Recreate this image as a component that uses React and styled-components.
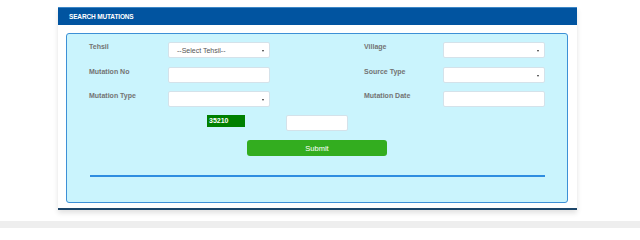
import React from 'react';
import styled, { createGlobalStyle } from 'styled-components';

const GlobalStyle = createGlobalStyle`
  html, body {
    margin: 0;
    padding: 0;
    background: #ffffff;
    font-family: 'Liberation Sans', Arial, sans-serif;
  }
`;

const Page = styled.div`
  width: 640px;
  height: 228px;
  overflow: hidden;
  display: flex;
  flex-direction: column;
`;

const Panel = styled.div`
  margin: 7px 0 0 58px;
  width: 519px;
  background: #ffffff;
  border-bottom: 2px solid #1d4669;
  box-shadow: 0 3px 5px rgba(0, 0, 0, 0.12);
`;

const Header = styled.div`
  height: 17px;
  border-top: 1px solid #3c86c6;
  background: #0154a0;
  color: #ffffff;
  font-size: 6.5px;
  font-weight: 700;
  letter-spacing: -0.15px;
  display: flex;
  align-items: center;
  padding-left: 11px;
`;

const Body = styled.div`
  padding: 8px 9px 5px 8px;
`;

const FormBox = styled.div`
  background: #caf4fd;
  border: 1px solid #3d90d6;
  border-radius: 3px;
  padding: 8px 0 25px 0;
  display: flex;
  flex-direction: column;
`;

const Grid = styled.div`
  display: grid;
  grid-template-columns: 79px 102px 94px 79px 102px;
  grid-auto-rows: 16px;
  row-gap: 8.5px;
  margin-left: 22px;
`;

const Label = styled.div`
  font-size: 7px;
  font-weight: 700;
  color: #737373;
  padding-top: 1px;
`;

const Field = styled.div`
  box-sizing: border-box;
  height: 16px;
  width: ${(p) => p.$w || 102}px;
  background: #ffffff;
  border: 1px solid #d4e2ea;
  border-radius: 2px;
  position: relative;
  font-size: 7px;
  color: #555;
  display: flex;
  align-items: center;
  padding-left: 8px;

  ${(p) =>
    p.$select &&
    `
    &::after {
      content: '';
      position: absolute;
      right: 5px;
      top: 7px;
      border-left: 1.5px solid transparent;
      border-right: 1.5px solid transparent;
      border-top: 2px solid #333;
    }
  `}
`;

const CaptchaRow = styled.div`
  display: flex;
  align-items: flex-start;
  gap: 41px;
  margin: 8px 0 0 140px;
`;

const Captcha = styled.div`
  width: 38px;
  height: 12px;
  background: #008000;
  color: #ffffff;
  font-size: 7px;
  font-weight: 700;
  padding-left: 2px;
  box-sizing: border-box;
  line-height: 11px;
`;

const SubmitButton = styled.button`
  margin: 9px 0 0 180px;
  width: 140px;
  height: 16px;
  border: none;
  border-radius: 3px;
  background: #33ad1f;
  color: #ffffff;
  font-family: 'Liberation Sans', Arial, sans-serif;
  font-size: 7.5px;
  padding: 0;
`;

const Divider = styled.div`
  margin: 19px 0 0 23px;
  width: 455px;
  height: 2px;
  background: #2f8de0;
`;

const Footer = styled.div`
  margin-top: 11px;
  height: 20px;
  background: #eeeeee;
`;

const rows = [
  { left: 'Tehsil', leftSelect: true, placeholder: '--Select Tehsil--', right: 'Village', rightSelect: true },
  { left: 'Mutation No', leftSelect: false, right: 'Source Type', rightSelect: true },
  { left: 'Mutation Type', leftSelect: true, right: 'Mutation Date', rightSelect: false },
];

export default function App() {
  return (
    <Page>
      <GlobalStyle />
      <Panel>
        <Header>SEARCH MUTATIONS</Header>
        <Body>
          <FormBox>
            <Grid>
              {rows.map((r) => (
                <React.Fragment key={r.left}>
                  <Label>{r.left}</Label>
                  <Field $select={r.leftSelect}>{r.placeholder}</Field>
                  <div />
                  <Label>{r.right}</Label>
                  <Field $select={r.rightSelect} />
                </React.Fragment>
              ))}
            </Grid>
            <CaptchaRow>
              <Captcha>35210</Captcha>
              <Field $w={62} />
            </CaptchaRow>
            <SubmitButton>Submit</SubmitButton>
            <Divider />
          </FormBox>
        </Body>
      </Panel>
      <Footer />
    </Page>
  );
}
